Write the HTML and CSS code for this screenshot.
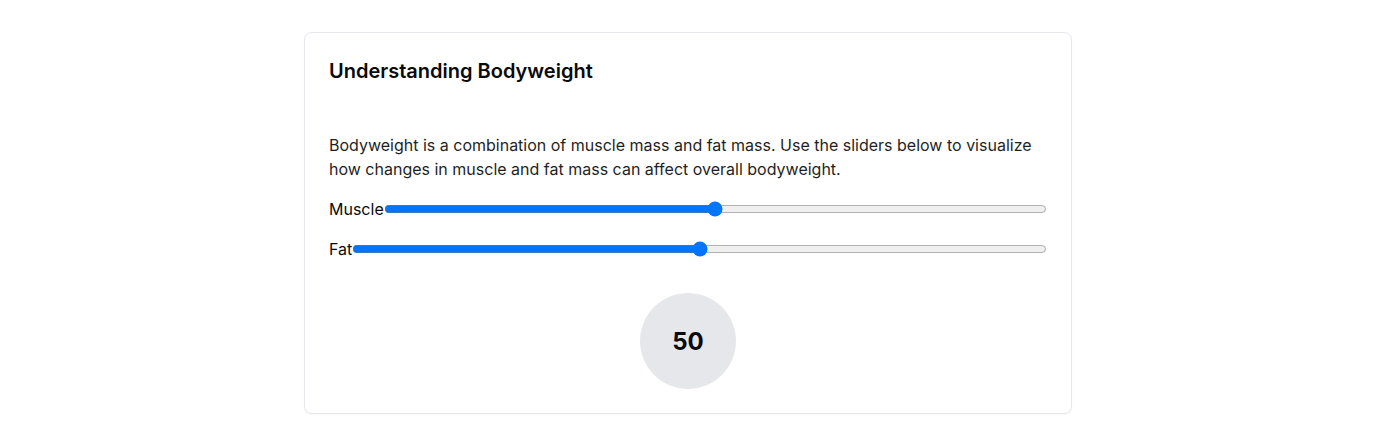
FILE: index.html
```html
<!DOCTYPE html>
<html lang="en">
<head>
<meta charset="utf-8">
<title>Understanding Bodyweight</title>
<link rel="stylesheet" href="styles.css">
</head>
<body>
<div class="page">
  <div class="card">
    <div class="card-header">
      <h3 class="card-title">Understanding Bodyweight</h3>
    </div>
    <div class="card-content">
      <p class="desc">Bodyweight is a combination of muscle mass and fat mass. Use the sliders below to visualize how changes in muscle and fat mass can affect overall bodyweight.</p>
      <div class="sliders">
        <div class="slider-row">
          <label class="slider-label" for="muscle">Muscle</label>
          <input class="slider" id="muscle" type="range" min="0" max="100" value="50">
        </div>
        <div class="slider-row">
          <label class="slider-label" for="fat">Fat</label>
          <input class="slider" id="fat" type="range" min="0" max="100" value="50">
        </div>
      </div>
      <div class="result">
        <div class="circle">50</div>
      </div>
    </div>
  </div>
</div>
</body>
</html>
```
FILE: styles.css
```css
* { box-sizing: border-box; }
html, body { margin: 0; padding: 0; background: #ffffff; }
body {
  font-family: Inter, "Noto Sans", sans-serif;
  color: #0a0a0a;
}
.page { padding: 32px 0; }
.card {
  width: 768px;
  margin: 0 auto;
  border: 1px solid #e5e7eb;
  border-radius: 8px;
  background: #fff;
  box-shadow: 0 1px 2px rgba(0,0,0,0.04);
}
.card-header { padding: 24px; }
.card-title {
  margin: 0;
  font-size: 20px;
  line-height: 28px;
  font-weight: 600;
  color: #0a0a0a;
}
.card-content { padding: 24px; }
.desc {
  margin: 0;
  font-size: 16px;
  line-height: 24px;
  color: #1f1f1f;
}
.sliders {
  margin-top: 16px;
  display: flex;
  flex-direction: column;
  gap: 16px;
}
.slider-row {
  display: flex;
  align-items: center;
  height: 24px;
}
.slider-label { font-size: 16px; line-height: 24px; }
.slider { flex: 1; margin: 0; min-width: 0; }
.result {
  margin-top: 32px;
  display: flex;
  justify-content: center;
}
.circle {
  width: 96px;
  height: 96px;
  border-radius: 50%;
  background: #e5e7eb;
  display: flex;
  align-items: center;
  justify-content: center;
  font-size: 24px;
  font-weight: 700;
  color: #0a0a0a;
}
```
